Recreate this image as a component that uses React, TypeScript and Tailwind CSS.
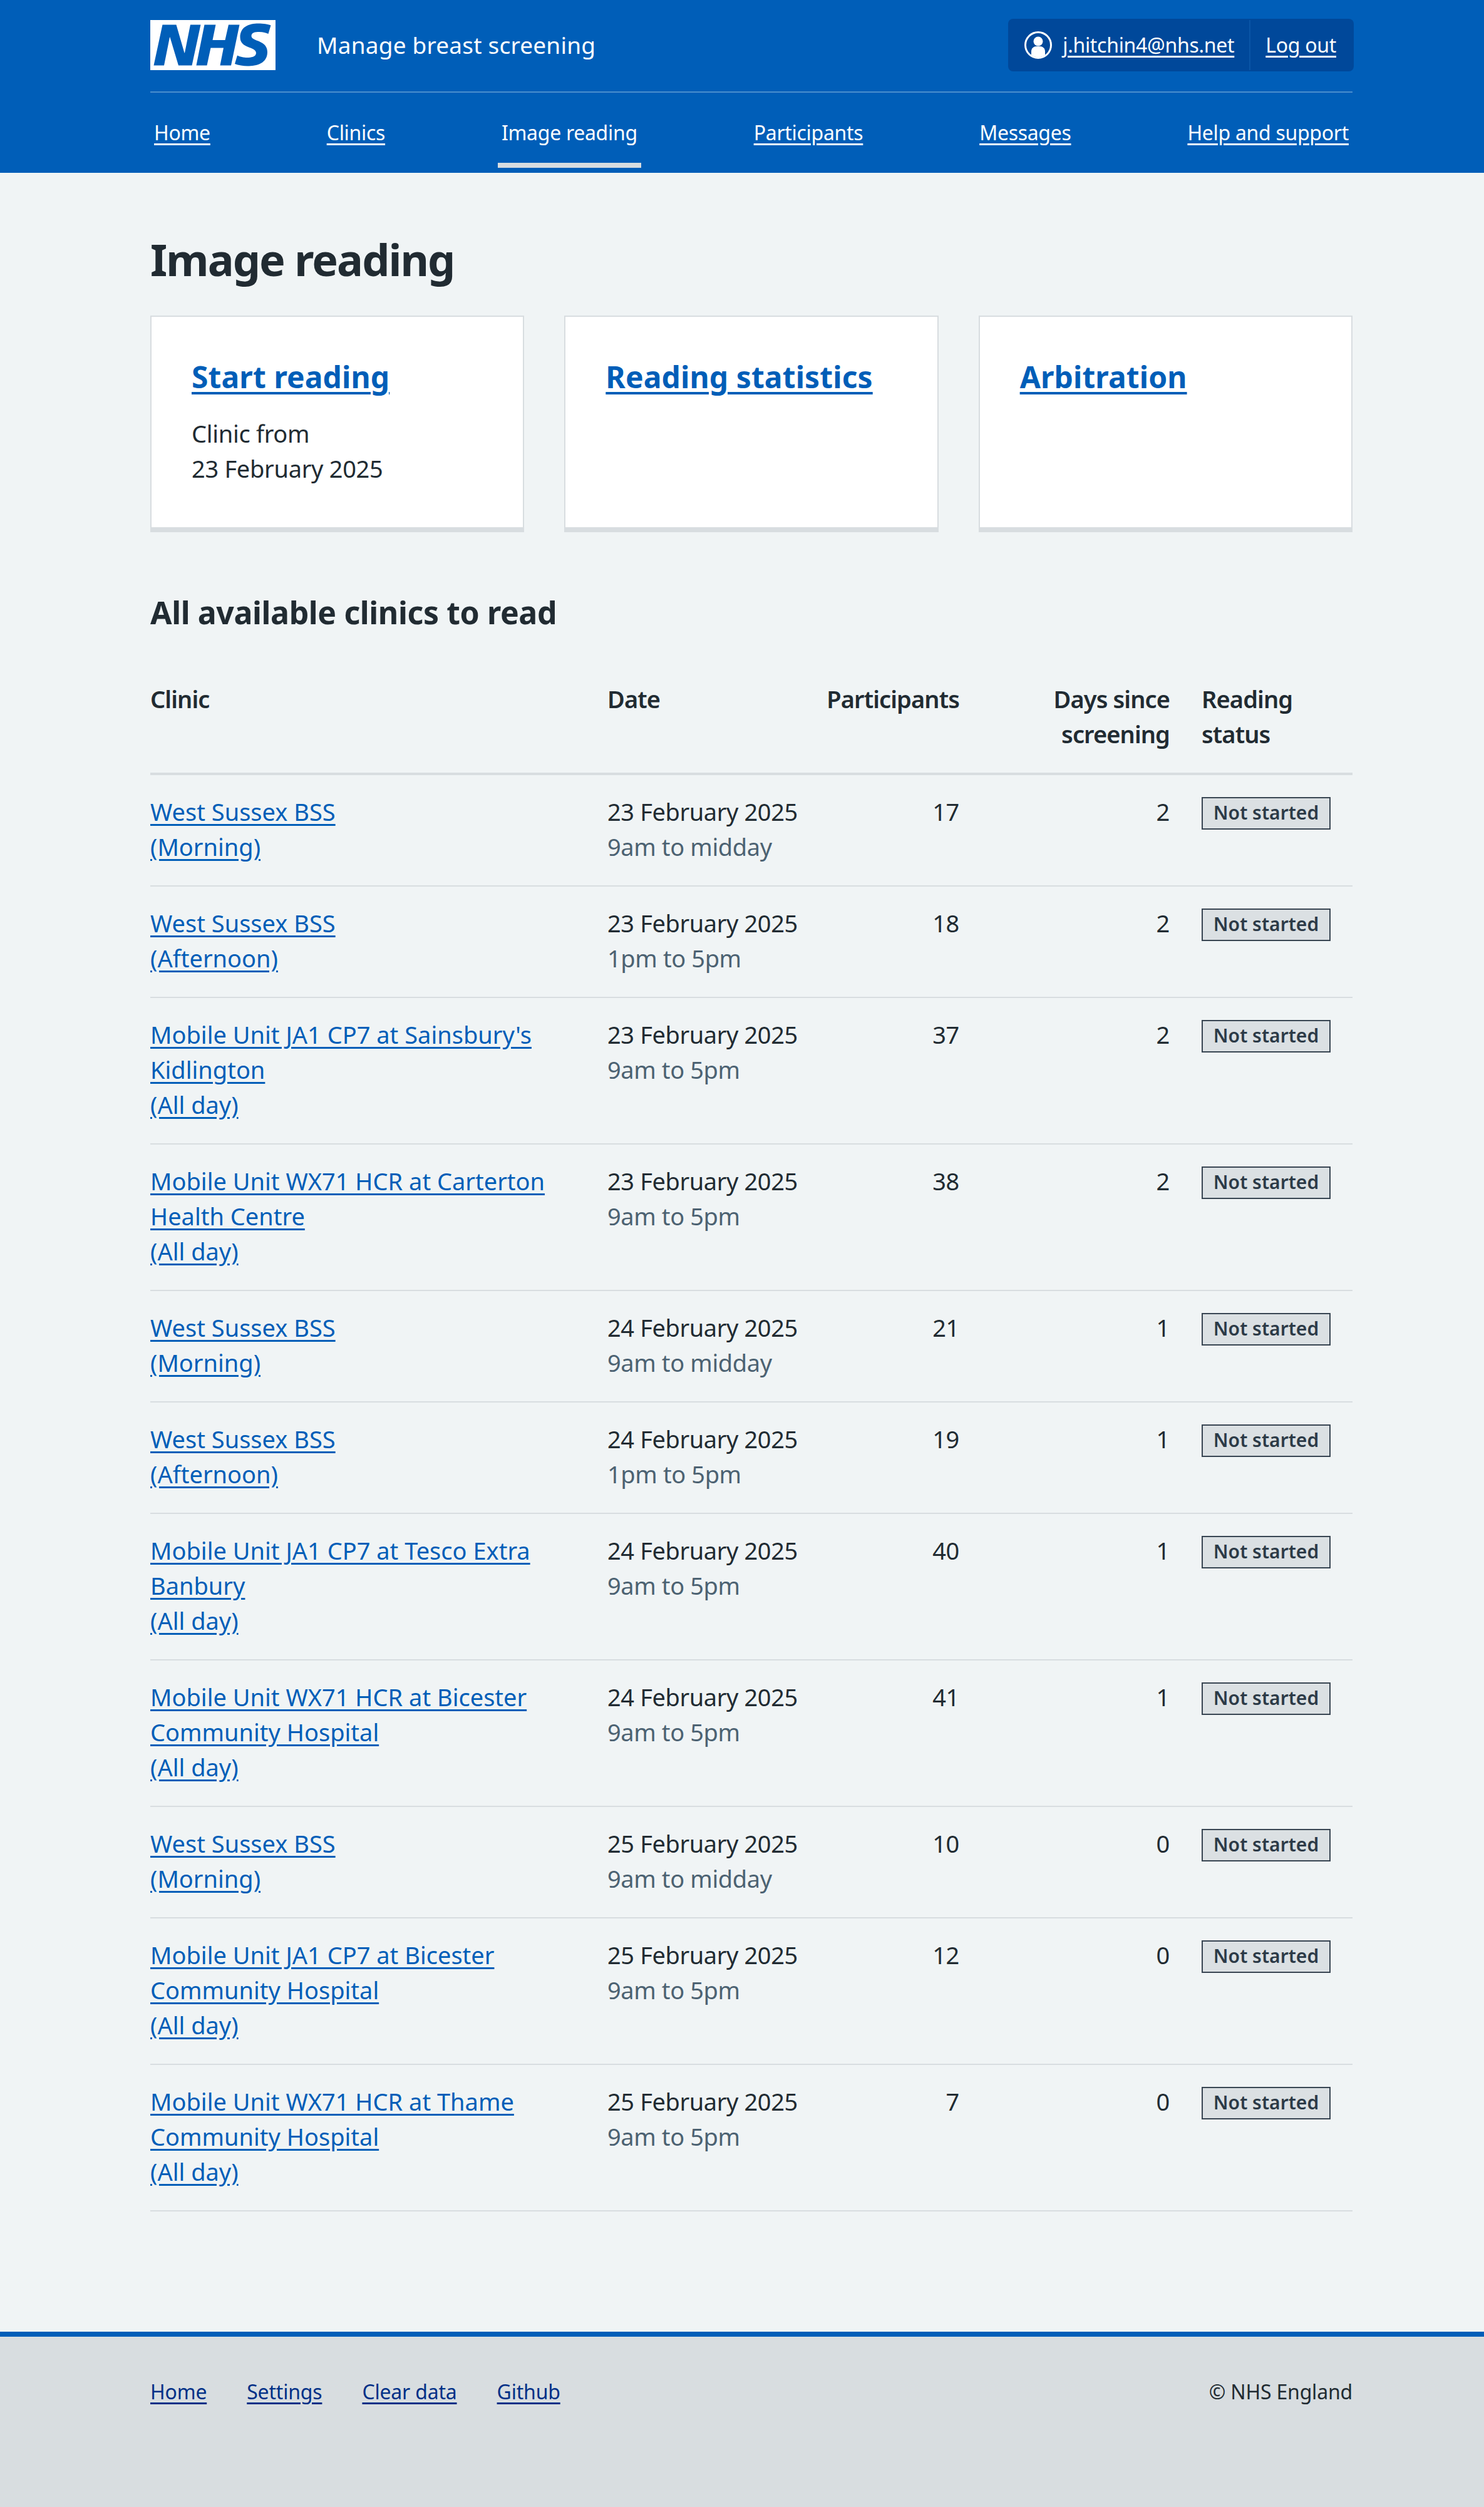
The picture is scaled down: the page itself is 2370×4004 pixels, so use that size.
import React from "react";

const clinics = [
  { name: ["West Sussex BSS", "(Morning)"], date: "23 February 2025", time: "9am to midday", participants: 17, days: 2 },
  { name: ["West Sussex BSS", "(Afternoon)"], date: "23 February 2025", time: "1pm to 5pm", participants: 18, days: 2 },
  { name: ["Mobile Unit JA1 CP7 at Sainsbury's", "Kidlington", "(All day)"], date: "23 February 2025", time: "9am to 5pm", participants: 37, days: 2 },
  { name: ["Mobile Unit WX71 HCR at Carterton", "Health Centre", "(All day)"], date: "23 February 2025", time: "9am to 5pm", participants: 38, days: 2 },
  { name: ["West Sussex BSS", "(Morning)"], date: "24 February 2025", time: "9am to midday", participants: 21, days: 1 },
  { name: ["West Sussex BSS", "(Afternoon)"], date: "24 February 2025", time: "1pm to 5pm", participants: 19, days: 1 },
  { name: ["Mobile Unit JA1 CP7 at Tesco Extra", "Banbury", "(All day)"], date: "24 February 2025", time: "9am to 5pm", participants: 40, days: 1 },
  { name: ["Mobile Unit WX71 HCR at Bicester", "Community Hospital", "(All day)"], date: "24 February 2025", time: "9am to 5pm", participants: 41, days: 1 },
  { name: ["West Sussex BSS", "(Morning)"], date: "25 February 2025", time: "9am to midday", participants: 10, days: 0 },
  { name: ["Mobile Unit JA1 CP7 at Bicester", "Community Hospital", "(All day)"], date: "25 February 2025", time: "9am to 5pm", participants: 12, days: 0 },
  { name: ["Mobile Unit WX71 HCR at Thame", "Community Hospital", "(All day)"], date: "25 February 2025", time: "9am to 5pm", participants: 7, days: 0 },
];

const navItems = ["Home", "Clinics", "Image reading", "Participants", "Messages", "Help and support"];
const footerLinks = ["Home", "Settings", "Clear data", "Github"];

const NhsLogo = () => (
  <svg viewBox="0 0 40 16" className="block h-[80px] w-[200px]">
    <path fill="#fff" d="M0 0h40v16H0z" />
    <path
      fill="#005eb8"
      d="M3.9 1.5h4.4l2.6 9h.1l1.8-9h3.3l-2.8 13H9l-2.7-9h-.1l-1.8 9H1.1M17.3 1.5h3.6l-1 4.9h4L25 1.5h3.5l-2.7 13h-3.5l1.1-5.6h-4.1l-1.2 5.6h-3.4M37.7 4.4c-.7-.3-1.6-.6-2.9-.6-1.4 0-2.5.2-2.5 1.3 0 1.8 5.1 1.2 5.1 5.1 0 3.6-3.3 4.5-6.4 4.5-1.3 0-2.9-.3-4-.7l.8-2.7c.7.4 2.1.7 3.2.7s2.8-.2 2.8-1.5c0-2.1-5.1-1.3-5.1-5 0-3.4 2.9-4.4 5.8-4.4 1.6 0 3.1.2 4 .6"
    />
  </svg>
);

const AccountIcon = () => (
  <svg viewBox="0 0 44 44" className="h-[44px] w-[44px] shrink-0">
    <circle cx="22" cy="22" r="20.5" fill="none" stroke="#fff" strokeWidth="3" />
    <circle cx="22" cy="16" r="7.5" fill="#fff" />
    <path fill="#fff" d="M11 38v-6c0-5 4-8 8-8h6c4 0 8 3 8 8v6c-3 2-7 3.5-11 3.5S14 40 11 38z" />
  </svg>
);

const Card = ({ title, children }: { title: string; children?: React.ReactNode }) => (
  <div className="border-2 border-b-[8px] border-[#d8dde0] bg-white px-[64px] pt-[64px] pb-[66px]">
    <a href="#" className="block text-[48px] leading-[64px] font-bold tracking-[0.1px] text-[#005eb8] underline decoration-[4px] underline-offset-[6px]">
      {title}
    </a>
    {children}
  </div>
);

const App = () => {
  return (
    <div className="min-h-[4004px] overflow-hidden bg-[#f0f4f5] font-['Noto_Sans',sans-serif] text-[38px] leading-[56px] tracking-[-0.3px] text-[#212b32]">
      <header className="h-[276px] bg-[#005eb8] text-white">
        <div className="ml-[240px] w-[1920px]">
          <div className="flex h-[148px] items-start justify-between border-b-2 border-[#4c8ecd] pt-[30px]">
            <div className="flex h-[84px] items-center">
              <NhsLogo />
              <span className="ml-[66px] text-[37px] leading-[44px] tracking-[0.2px]">Manage breast screening</span>
            </div>
            <div className="-mr-[2px] flex h-[84px] items-center rounded-[8px] bg-[#00489a] text-[32px] leading-[40px] tracking-[-0.3px]">
              <div className="flex h-full items-center gap-[17px] pr-[24px] pl-[26px]">
                <AccountIcon />
                <a href="#" className="underline underline-offset-[5px]">j.hitchin4@nhs.net</a>
              </div>
              <div className="flex h-[80px] items-center border-l-2 border-[#0a55a6] pr-[28px] pl-[24px]">
                <a href="#" className="underline underline-offset-[5px]">Log out</a>
              </div>
            </div>
          </div>
          <nav className="flex justify-between text-[32px] leading-[40px] tracking-[-0.3px]">
            {navItems.map((item) =>
              item === "Image reading" ? (
                <span key={item} className="h-[120px] border-b-[8px] border-[#d8dde0] px-[6px] pt-[44px]">{item}</span>
              ) : (
                <span key={item} className="h-[120px] px-[6px] pt-[44px]">
                  <a href="#" className="underline underline-offset-[5px]">{item}</a>
                </span>
              )
            )}
          </nav>
        </div>
      </header>

      <main className="ml-[240px] w-[1920px]">
        <h1 className="pt-[96px] pb-[48px] text-[70px] leading-[84px] font-bold tracking-[-1.9px]">Image reading</h1>

        <div className="grid grid-cols-3 gap-[64px]">
          <Card title="Start reading">
            <p className="mt-[30px]">Clinic from<br />23 February 2025</p>
          </Card>
          <Card title="Reading statistics" />
          <Card title="Arbitration" />
        </div>

        <h2 className="pt-[94px] pb-[76px] text-[50px] leading-[68px] font-bold tracking-[-0.4px]">All available clinics to read</h2>

        <table className="w-full table-fixed border-collapse">
          <thead>
            <tr className="border-b-4 border-[#d8dde0] text-left tracking-[-0.9px]">
              <th className="w-[730px] pb-[34px] align-top font-semibold">Clinic</th>
              <th className="w-[320px] pb-[34px] align-top font-semibold">Date</th>
              <th className="w-[242px] pb-[34px] text-right align-top font-semibold">Participants</th>
              <th className="w-[336px] pb-[34px] text-right align-top font-semibold">Days since<br />screening</th>
              <th className="w-[292px] pb-[34px] pl-[51px] align-top font-semibold">Reading<br />status</th>
            </tr>
          </thead>
          <tbody>
            {clinics.map((clinic, index) => (
              <tr key={index} className="border-b-2 border-[#d8dde0]">
                <td className="pt-[30px] pb-[34px] align-top tracking-normal whitespace-nowrap">
                  <a href="#" className="text-[#005eb8] underline underline-offset-[5px]">
                    {clinic.name.map((line, i) => (
                      <React.Fragment key={i}>
                        {i > 0 && <br />}
                        {line}
                      </React.Fragment>
                    ))}
                  </a>
                </td>
                <td className="pt-[30px] pb-[34px] align-top tracking-[-0.4px] whitespace-nowrap">
                  {clinic.date}
                  <br />
                  <span className="text-[#4c6272]">{clinic.time}</span>
                </td>
                <td className="pt-[30px] pb-[34px] text-right align-top">{clinic.participants}</td>
                <td className="pt-[30px] pb-[34px] text-right align-top">{clinic.days}</td>
                <td className="pt-[35px] pb-[32px] pl-[51px] align-top">
                  <div className="h-[52px] w-[206px] border-2 border-[#384552] bg-[#dbe0e3] text-center text-[30px] leading-[46px] font-semibold tracking-normal text-[#2c3a47]">
                    Not started
                  </div>
                </td>
              </tr>
            ))}
          </tbody>
        </table>
      </main>

      <footer className="mt-[192px] h-[280px] border-t-[8px] border-[#005eb8] bg-[#d8dde0]">
        <div className="ml-[240px] flex w-[1920px] items-start justify-between pt-[68px] text-[32px] leading-[40px] tracking-[-0.2px]">
          <div className="flex gap-[64px]">
            {footerLinks.map((link) => (
              <a key={link} href="#" className="text-[#003087] underline underline-offset-[5px]">{link}</a>
            ))}
          </div>
          <span>© NHS England</span>
        </div>
      </footer>
    </div>
  );
};

export default App;
